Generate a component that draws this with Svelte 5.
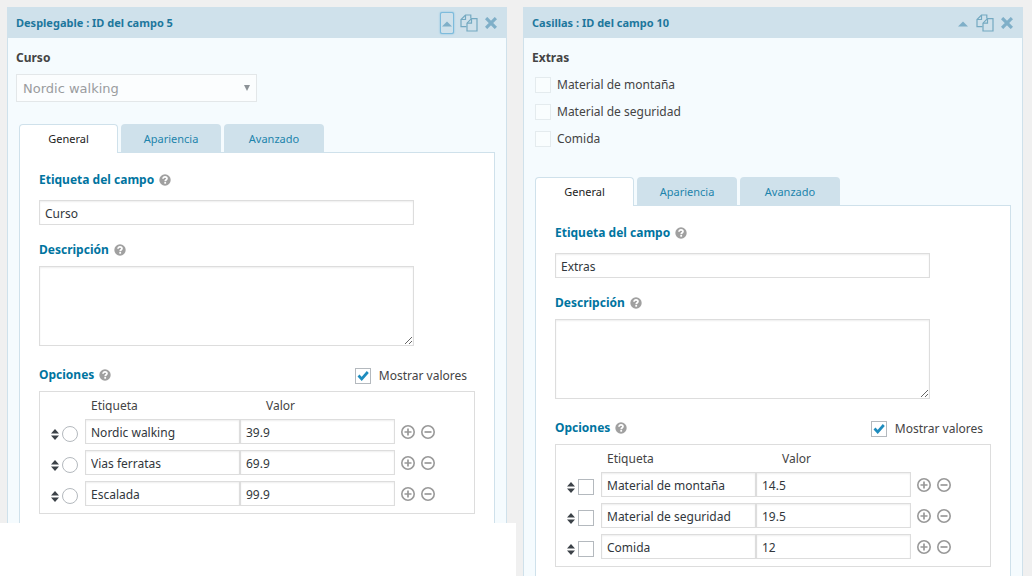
<script lang="ts">
  let fields = $state([
    {
      id: 5,
      type: 'Desplegable',
      label: 'Curso',
      description: '',
      focused: true,
      showValues: true,
      choices: [
        { label: 'Nordic walking', value: '39.9' },
        { label: 'Vias ferratas', value: '69.9' },
        { label: 'Escalada', value: '99.9' },
      ],
    },
    {
      id: 10,
      type: 'Casillas',
      label: 'Extras',
      description: '',
      focused: false,
      showValues: true,
      choices: [
        { label: 'Material de montaña', value: '14.5' },
        { label: 'Material de seguridad', value: '19.5' },
        { label: 'Comida', value: '12' },
      ],
    },
  ]);

  const tabs = ['General', 'Apariencia', 'Avanzado'];
  let activeTab = $state({ 5: 'General', 10: 'General' });

  function addChoice(field, index) {
    field.choices.splice(index + 1, 0, { label: '', value: '' });
  }

  function removeChoice(field, index) {
    if (field.choices.length > 1) {
      field.choices.splice(index, 1);
    }
  }
</script>

{#snippet help()}
  <button class="icon-button" aria-label="Ayuda">
    <svg width="12" height="12" viewBox="0 0 12 12">
      <circle cx="6" cy="6" r="5.7" fill="#a0a0a0" />
      <path d="M4 4.8C4 3.4 5 2.8 6 2.8c1.2 0 2 .7 2 1.7C8 5.7 6.2 5.8 6.2 7.2" fill="none" stroke="#fff" stroke-width="1.7" />
      <rect x="5.3" y="8" width="1.8" height="1.7" fill="#fff" />
    </svg>
  </button>
{/snippet}

<div class="editor">
  {#each fields as field (field.id)}
    <div class="column">
      <section class="panel">
        <header class="panel-header">
          <h2>{field.type} : ID del campo {field.id}</h2>
          <div class="actions">
            <button class="icon-button toggle" class:focused={field.focused} aria-label="Contraer">
              <svg width="10" height="6" viewBox="0 0 10 6"><path d="M5 0.5L10 5.5H0z" fill="#7fafc8" /></svg>
            </button>
            <button class="icon-button" aria-label="Duplicar">
              <svg width="18" height="18" viewBox="0 0 18 18" fill="none" stroke="#74a9c1" stroke-width="1.2">
                <path d="M6.5 12.6H1V5.5L5.500 1H10.800V4.5" />
                <path d="M5.5 1V5.500H1" />
                <path d="M11.5 4.6H17V17H7V9.2z" />
                <path d="M11.5 4.6V9.2H7" />
              </svg>
            </button>
            <button class="icon-button" aria-label="Eliminar">
              <svg width="12" height="12" viewBox="0 0 12 12"><path d="M2.2 2.2L9.8 9.8M9.8 2.2L2.2 9.8" stroke="#7fafc8" stroke-width="3.2" stroke-linecap="square" /></svg>
            </button>
          </div>
        </header>

        <div class="panel-body">
          {#if field.type === 'Desplegable'}
            <label class="preview-label" for="preview-{field.id}">{field.label}</label>
            <div class="preview-select">
              <select id="preview-{field.id}" disabled>
                {#each field.choices as choice}
                  <option>{choice.label}</option>
                {/each}
              </select>
              <svg width="6" height="6" viewBox="0 0 6 6"><path d="M0 0H6L3 6z" fill="#8c9297" /></svg>
            </div>
          {:else}
            <span class="preview-label">{field.label}</span>
            <ul class="preview-list">
              {#each field.choices as choice}
                <li><label><input type="checkbox" disabled />{choice.label}</label></li>
              {/each}
            </ul>
          {/if}

          <div class="tabs" role="tablist">
            {#each tabs as tab}
              <button
                class="tab"
                class:active={activeTab[field.id] === tab}
                role="tab"
                aria-selected={activeTab[field.id] === tab}
                onclick={() => (activeTab[field.id] = tab)}
              >{tab}</button>
            {/each}
          </div>

          <div class="settings">
            <div class="setting-label">
              <label for="label-{field.id}">Etiqueta del campo</label>
              {@render help()}
            </div>
            <input id="label-{field.id}" class="text-input wide" type="text" bind:value={field.label} />

            <div class="setting-label">
              <label for="description-{field.id}">Descripción</label>
              {@render help()}
            </div>
            <textarea id="description-{field.id}" class="wide" bind:value={field.description}></textarea>

            <div class="setting-label options">
              <span>Opciones</span>
              {@render help()}
              <label class="show-values">
                <input type="checkbox" bind:checked={field.showValues} />Mostrar valores
              </label>
            </div>

            <div class="choices">
              <table>
                <thead>
                  <tr>
                    <td class="col-default"></td>
                    <th>Etiqueta</th>
                    <th class="col-value">Valor</th>
                    <td class="col-actions"></td>
                  </tr>
                </thead>
                <tbody>
                  {#each field.choices as choice, i}
                    <tr>
                      <td>
                        <div class="choice-default">
                          <svg width="8" height="11" viewBox="0 0 8 11" fill="#3c4248"><path d="M4 0L8 4.5H0zM0 6.5H8L4 11z" /></svg>
                          {#if field.type === 'Desplegable'}
                            <input type="radio" name="default-{field.id}" aria-label="Seleccionar {choice.label}" />
                          {:else}
                            <input type="checkbox" aria-label="Seleccionar {choice.label}" />
                          {/if}
                        </div>
                      </td>
                      <td><input class="text-input" type="text" aria-label="Etiqueta" bind:value={choice.label} /></td>
                      <td><input class="text-input" type="text" aria-label="Valor" bind:value={choice.value} /></td>
                      <td>
                        <div class="choice-actions">
                          <button class="icon-button" aria-label="Añadir" onclick={() => addChoice(field, i)}>
                            <svg width="14" height="14" viewBox="0 0 14 14" fill="none" stroke="#999"><circle cx="7" cy="7" r="6.2" stroke-width="1.6" /><path d="M3.5 7H10.5M7 3.5V10.5" stroke-width="1.7" /></svg>
                          </button>
                          <button class="icon-button" aria-label="Quitar" onclick={() => removeChoice(field, i)}>
                            <svg width="14" height="14" viewBox="0 0 14 14" fill="none" stroke="#999"><circle cx="7" cy="7" r="6.2" stroke-width="1.6" /><path d="M3.5 7H10.5" stroke-width="1.7" /></svg>
                          </button>
                        </div>
                      </td>
                    </tr>
                  {/each}
                </tbody>
              </table>
            </div>
          </div>
        </div>
      </section>
    </div>
  {/each}
</div>

<style>
  :global(body) {
    background: #fff;
  }

  .editor,
  .editor * {
    box-sizing: border-box;
  }

  .editor {
    display: grid;
    grid-template-columns: 1fr 1fr;
    align-items: start;
    font-family: 'Noto Sans', 'Open Sans', sans-serif;
    font-size: 12px;
    line-height: 20px;
    color: #444;
  }

  .column {
    padding: 7px 9px 0 7px;
    background: #f0f0f0;
  }

  .panel {
    border: 1px solid #cfe1eb;
    border-width: 0 1px;
    background: #f5fbfe;
  }

  .panel-header {
    display: flex;
    align-items: center;
    justify-content: space-between;
    height: 31px;
    padding: 0 9px 0 8px;
    background: #cfe1eb;
  }

  h2 {
    margin: 0;
    font-size: 11px;
    font-weight: 700;
    color: #1d779d;
  }

  .actions {
    display: flex;
    align-items: center;
    gap: 7px;
  }

  .icon-button {
    display: flex;
    align-items: center;
    justify-content: center;
    padding: 0;
    border: 0;
    background: none;
    cursor: pointer;
  }

  .toggle {
    width: 12px;
    height: 20px;
    padding-top: 3px;
  }

  .toggle.focused {
    border-radius: 1px;
    box-shadow: 0 0 0 1px #7dbbdc, 0 0 2px 1px #7dbbdc;
  }

  .panel-body {
    padding: 10px 11px 0;
  }

  .preview-label {
    display: block;
    margin-left: -3px;
    font-weight: 700;
    line-height: 19px;
  }

  .preview-select {
    display: flex;
    align-items: center;
    width: calc(50% + 3px);
    height: 28px;
    margin: 7px 0 22px -3px;
    padding-right: 6px;
    border: 1px solid #e3e7e9;
    background: #fbfdfe;
  }

  .preview-select select {
    flex: 1;
    padding: 0 6px;
    border: 0;
    appearance: none;
    background: none;
    font-family: 'DejaVu Sans', sans-serif;
    font-size: 13px;
    color: #9a9c9e;
    opacity: 1;
  }

  .preview-list {
    margin: 4px 0 25px;
    padding: 0;
    list-style: none;
  }

  .preview-list label {
    display: flex;
    align-items: center;
    gap: 6px;
    height: 27px;
  }

  input[type='checkbox'],
  input[type='radio'] {
    flex: none;
    width: 16px;
    height: 16px;
    margin: 0;
    border: 1px solid #b4b9be;
    appearance: none;
    background: #fff;
  }

  input[type='radio'] {
    border-radius: 50%;
  }

  input[type='checkbox']:disabled {
    border-color: #e4ebee;
    background: #f9fdfe;
  }

  input[type='checkbox']:checked {
    background: #fff url("data:image/svg+xml,%3Csvg xmlns='http://www.w3.org/2000/svg' viewBox='0 0 14 14'%3E%3Cpath d='M2.5 6.5L5.7 9.9L11.8 3' fill='none' stroke='%231e8cbe' stroke-width='2.7'/%3E%3C/svg%3E") center / 14px no-repeat;
  }

  .tabs {
    display: flex;
    align-items: flex-start;
    gap: 3px;
    height: 28px;
  }

  .tab {
    width: 100px;
    height: 28px;
    padding: 0;
    border: 0;
    border-radius: 4px 4px 0 0;
    background: #cfe1eb;
    font-family: inherit;
    font-size: 11px;
    color: #1d84ab;
    cursor: pointer;
  }

  .tab.active {
    position: relative;
    width: 99px;
    height: 29px;
    padding-bottom: 2px;
    border: 1px solid #cfe1eb;
    border-bottom: 0;
    background: #fff;
    color: #222;
  }

  .settings {
    padding: 17px 19px 9px;
    border: 1px solid #cfe1eb;
    border-bottom: 0;
    background: #fff;
  }

  .setting-label {
    display: flex;
    align-items: center;
    gap: 5px;
    margin-bottom: 10px;
    font-weight: 700;
    color: #00749f;
  }

  .text-input {
    display: block;
    width: 100%;
    height: 25px;
    padding: 2px 5px 0;
    border: 1px solid #ddd;
    background: #fff;
    box-shadow: inset 0 1px 2px rgba(0, 0, 0, 0.07);
    font-family: inherit;
    font-size: 12px;
    color: #32373c;
  }

  .wide {
    display: block;
    width: 86%;
  }

  .text-input + .setting-label {
    margin: 15px 0 6px;
  }

  textarea {
    height: 80px;
    padding: 4px 5px;
    border: 1px solid #ddd;
    box-shadow: inset 0 1px 2px rgba(0, 0, 0, 0.07);
    font-family: inherit;
    font-size: 12px;
    resize: vertical;
  }

  .setting-label.options {
    margin: 18px 0 5px;
  }

  .show-values {
    display: flex;
    align-items: center;
    gap: 8px;
    margin: 2px 8px 0 auto;
    font-weight: 400;
    color: #444;
  }

  .choices {
    padding-bottom: 4px;
    border: 1px solid #ddd;
  }

  table {
    width: 100%;
    border-spacing: 0;
    table-layout: fixed;
  }

  th,
  td {
    padding: 0;
  }

  th {
    height: 24px;
    padding: 4px 0 0 6px;
    font-weight: 400;
    text-align: left;
  }

  tbody td {
    height: 31px;
  }

  .col-default {
    width: 45px;
  }

  .col-actions {
    width: 79px;
  }

  .col-value {
    padding-left: 26px;
  }

  .choice-default {
    display: flex;
    align-items: center;
    gap: 3px;
    padding: 5px 0 0 11px;
  }

  .choice-actions {
    display: flex;
    gap: 6px;
    padding-left: 6px;
  }
</style>
